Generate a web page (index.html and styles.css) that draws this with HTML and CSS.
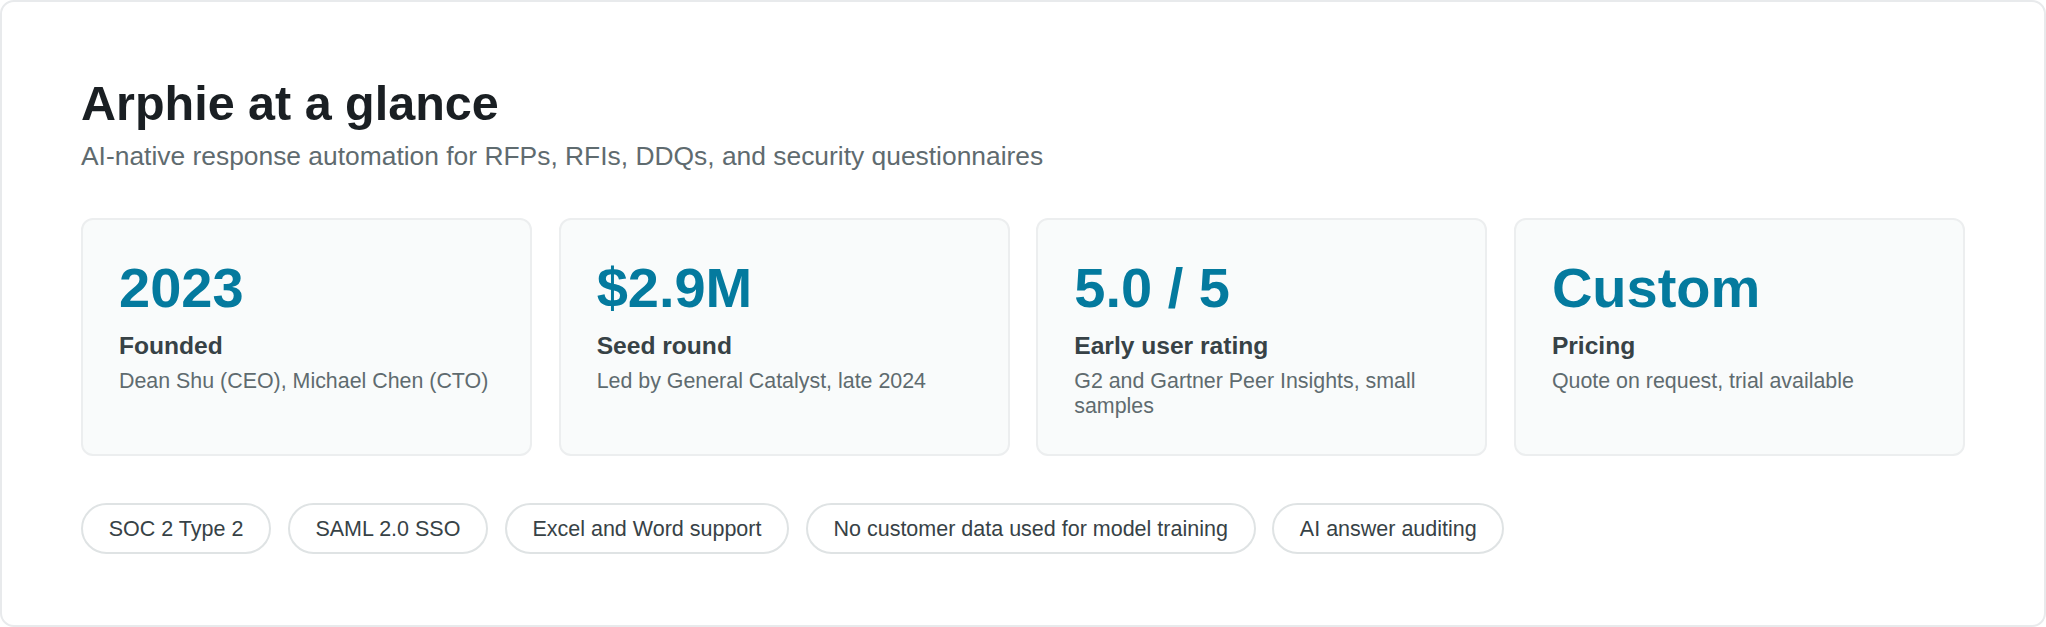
FILE: index.html
```html
<!DOCTYPE html>
<html lang="en">
<head>
<meta charset="utf-8">
<title>Arphie at a glance</title>
<link rel="stylesheet" href="styles.css">
</head>
<body>
<main class="panel">
  <h1 class="title">Arphie at a glance</h1>
  <p class="subtitle">AI-native response automation for RFPs, RFIs, DDQs, and security questionnaires</p>
  <section class="cards">
    <article class="card">
      <div class="value">2023</div>
      <div class="label">Founded</div>
      <div class="desc">Dean Shu (CEO), Michael Chen (CTO)</div>
    </article>
    <article class="card">
      <div class="value">$2.9M</div>
      <div class="label">Seed round</div>
      <div class="desc">Led by General Catalyst, late 2024</div>
    </article>
    <article class="card">
      <div class="value">5.0 / 5</div>
      <div class="label">Early user rating</div>
      <div class="desc">G2 and Gartner Peer Insights, small samples</div>
    </article>
    <article class="card">
      <div class="value">Custom</div>
      <div class="label">Pricing</div>
      <div class="desc">Quote on request, trial available</div>
    </article>
  </section>
  <ul class="chips">
    <li class="chip">SOC 2 Type 2</li>
    <li class="chip">SAML 2.0 SSO</li>
    <li class="chip">Excel and Word support</li>
    <li class="chip">No customer data used for model training</li>
    <li class="chip">AI answer auditing</li>
  </ul>
</main>
</body>
</html>
```
FILE: styles.css
```css
* { box-sizing: border-box; }
html, body { margin: 0; height: 100%; background: #fff; }
body { font-family: "Liberation Sans", Arial, sans-serif; }
.panel {
  height: 627px;
  border: 2px solid #e8eaec;
  border-radius: 14px;
  padding: 75px 79px 0;
  background: #fff;
}
.title {
  margin: 0;
  font-size: 48.5px;
  line-height: 52px;
  font-weight: 700;
  color: #1a1f23;
}
.subtitle {
  margin: 9px 0 0;
  font-size: 26.4px;
  line-height: 36px;
  color: #5f6b6f;
}
.cards {
  display: grid;
  grid-template-columns: repeat(4, 1fr);
  gap: 26.5px;
  margin-top: 44px;
}
.card {
  height: 238px;
  padding: 38px 36px 0;
  background: #f9fbfb;
  border: 2px solid #eceeef;
  border-radius: 12px;
}
.value {
  font-size: 56px;
  line-height: 60px;
  font-weight: 700;
  color: #047a9e;
}
.label {
  margin-top: 12px;
  font-size: 24.6px;
  line-height: 32px;
  font-weight: 700;
  color: #374246;
}
.desc {
  margin-top: 7px;
  font-size: 21.4px;
  line-height: 25px;
  color: #5f6b6f;
}
.chips {
  display: flex;
  gap: 16.5px;
  list-style: none;
  margin: 47px 0 0;
  padding: 0;
}
.chip {
  height: 51px;
  padding: 1px 25.75px 0;
  display: flex;
  align-items: center;
  font-size: 21.5px;
  color: #374246;
  background: #fff;
  border: 2px solid #dfe3e4;
  border-radius: 26px;
}
```
